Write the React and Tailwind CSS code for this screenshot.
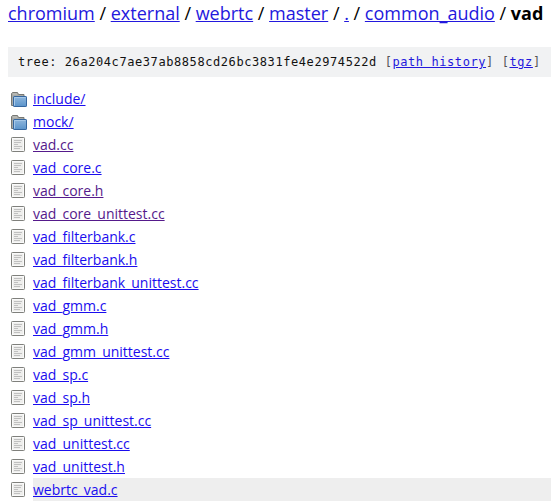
const crumbs = ['chromium', 'external', 'webrtc', 'master', '.', 'common_audio'];

const entries = [
  { name: 'include/', folder: true },
  { name: 'mock/', folder: true },
  { name: 'vad.cc', visited: true },
  { name: 'vad_core.c' },
  { name: 'vad_core.h', visited: true },
  { name: 'vad_core_unittest.cc', visited: true },
  { name: 'vad_filterbank.c' },
  { name: 'vad_filterbank.h' },
  { name: 'vad_filterbank_unittest.cc' },
  { name: 'vad_gmm.c' },
  { name: 'vad_gmm.h' },
  { name: 'vad_gmm_unittest.cc' },
  { name: 'vad_sp.c' },
  { name: 'vad_sp.h' },
  { name: 'vad_sp_unittest.cc' },
  { name: 'vad_unittest.cc' },
  { name: 'vad_unittest.h' },
  { name: 'webrtc_vad.c', active: true },
];

function FolderIcon() {
  return (
    <svg width="16" height="16" viewBox="0 0 16 16" className="block">
      <defs>
        <linearGradient id="folder-front" x1="0" y1="0" x2="0" y2="1">
          <stop offset="0" stopColor="#8fb7dd" />
          <stop offset="1" stopColor="#5b94cb" />
        </linearGradient>
      </defs>
      <path d="M.5 14.5V2.5L1.5 1.5h5l1 2h5.5v11z" fill="#a9aaa6" stroke="#777874" />
      <path d="M2 5.5h10M2 3h4" stroke="#c3c4c0" />
      <rect x="2.5" y="5.5" width="13" height="10" rx=".6" fill="url(#folder-front)" stroke="#34669f" />
      <path d="M3.5 14.5v-8h11" fill="none" stroke="#a6c8e8" />
    </svg>
  );
}

function FileIcon() {
  return (
    <svg width="16" height="16" viewBox="0 0 16 16" className="block">
      <rect x=".5" y=".5" width="13" height="14" rx=".8" fill="#fafafa" stroke="#7f807c" />
      <rect x="2" y="2" width="10" height="11" fill="#eeeeec" />
      <path d="M3 3.5h8M3 5.5h7M3 7.5h4M3 9.5h8M3 11.5h6" stroke="#c0c0c0" />
    </svg>
  );
}

export default function App() {
  return (
    <div className="h-[501px] overflow-hidden bg-white pl-2 font-['Open_Sans','Noto_Sans',sans-serif] text-black">
      <nav className="h-[47px] pt-px text-[18px] leading-[25px] whitespace-nowrap">
        {crumbs.map((c) => (
          <span key={c}>
            <a className="text-[#2318dd] underline">{c}</a>
            {' / '}
          </span>
        ))}
        <b>vad</b>
      </nav>
      <div className="h-[30px] bg-[#f1f2f3] pl-2.5 pt-px font-['DejaVu_Sans_Mono','Liberation_Mono',monospace] text-[12px] tracking-[0.576px] leading-[28px] whitespace-pre text-[#111]">
        tree: 26a204c7ae37ab8858cd26bc3831fe4e2974522d{' '}
        <span className="text-[#555]">
          [<a className="text-[#2318dd] underline">path history</a>] [
          <a className="text-[#2318dd] underline">tgz</a>]
        </span>
      </div>
      <ul className="mt-[10px] text-[14px] leading-[23px]">
        {entries.map((e) => (
          <li key={e.name} className="flex h-[23px]">
            <span className="w-[25px] shrink-0 pl-[3px] pt-1">{e.folder ? <FolderIcon /> : <FileIcon />}</span>
            <div className={e.active ? 'grow bg-[#eeeeee]' : 'grow'}>
              <a className={e.visited ? 'text-[#551a8b] underline' : 'text-[#1a0dee] underline'}>{e.name}</a>
            </div>
          </li>
        ))}
      </ul>
    </div>
  );
}
